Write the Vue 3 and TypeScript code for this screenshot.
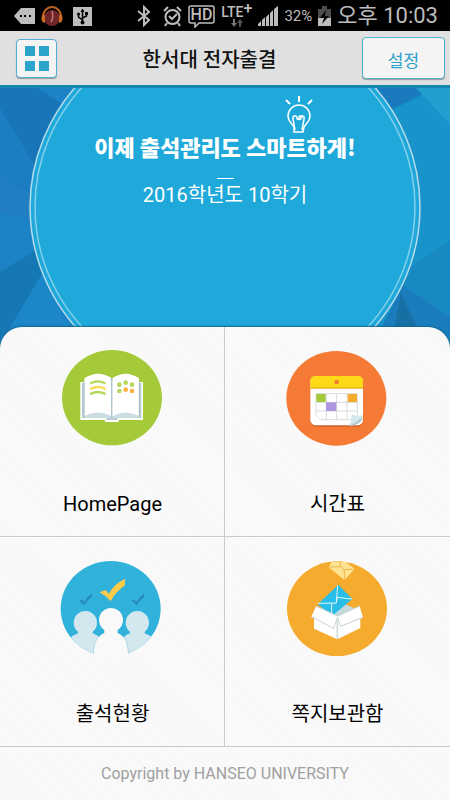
<script setup lang="ts">
interface MenuItem {
  id: string
  label: string
}

const menu: MenuItem[] = [
  { id: 'home', label: 'HomePage' },
  { id: 'timetable', label: '시간표' },
  { id: 'attendance', label: '출석현황' },
  { id: 'messages', label: '쪽지보관함' },
]
</script>

<template>
  <div class="app">
    <div class="status">
      <div class="status-group notices">
        <svg width="21" height="20" viewBox="0 0 21 20" aria-hidden="true">
          <path d="M0 10 L7 2 H21 V18 H7 Z" fill="#bdbdbd" />
          <path d="M6 9h2v2H6zM10 9h2v2h-2zM15 9h2v2h-2z" fill="#000" />
        </svg>
        <svg width="22" height="22" viewBox="0 0 22 22" aria-hidden="true">
          <circle cx="11" cy="13" r="8" fill="#6f2527" />
          <path d="M11 6 Q13 12 10 17" stroke="#bd7773" stroke-width="1.500" fill="none" />
          <path d="M2 14 C1 -2 21 -2 20 14" stroke="#b8601e" stroke-width="2" fill="none" />
          <path d="M1 10h3v8C0 17 0 14 1 10zM21 10h-3v8c4-1 4-4 3-8z" fill="#c76b24" />
        </svg>
        <svg width="24" height="20" viewBox="0 0 24 20" aria-hidden="true">
          <rect x="4" y="1" width="19" height="19" fill="#bdbdbd" />
          <path d="M13.500 4v12M9.500 8v3l4 3M17.500 7v3l-4 2" stroke="#000" stroke-width="1.500" fill="none" />
          <path d="M11.500 6l2-3.500 2 3.500zM16 6h3v3h-3z" fill="#000" />
          <circle cx="9.500" cy="8" r="1.500" />
          <circle cx="13.500" cy="16.500" r="2" />
        </svg>
      </div>
      <div class="status-group">
        <svg class="bluetooth" width="14" height="22" viewBox="0 0 14 22" aria-hidden="true">
          <path d="M1 6 L12 15 L7 20 V2 L12 7 L1 16" fill="none" stroke="#bdbdbd" stroke-width="2" />
        </svg>
        <svg width="19" height="22" viewBox="0 0 19 22" aria-hidden="true">
          <g fill="none" stroke="#bdbdbd" stroke-width="2">
            <circle cx="9.500" cy="12" r="7" />
            <path d="M1 6 L5 2M18 6 L14 2M4 18l-2 3M15 18l2 3" />
            <path d="M6 11l3 3 5-5" />
          </g>
        </svg>
        <svg width="27" height="24" viewBox="0 0 27 24" aria-hidden="true">
          <path d="M3 2H24Q26 2 26 4V17Q26 19 24 19H11L7 23V19H3Q1 19 1 17V4Q1 2 3 2Z" fill="none" stroke="#bdbdbd" stroke-width="1.500" />
          <text x="13.500" y="16" text-anchor="middle" font-family="Roboto, sans-serif" font-size="16" font-weight="500" fill="#bdbdbd">HD</text>
        </svg>
        <div class="lte">
          <span>LTE<sup>+</sup></span>
          <svg width="12" height="8" viewBox="0 0 12 8" aria-hidden="true">
            <path d="M2 0h2v4h2L3 8 0 4h2z" fill="#777" />
            <path d="M8 8h2V4h2L9 0 6 4h2z" fill="#555" />
          </svg>
        </div>
        <svg width="20" height="20" viewBox="0 0 20 20" aria-hidden="true">
          <path d="M0 20v-2l3-3v5zM4 20v-6l3-3v9zM8 20v-9l3-3v12zM12 20V7l3-3v16zM16 20V3l4-3v20z" fill="#bdbdbd" />
        </svg>
        <span class="percent">32%</span>
        <svg width="13" height="20" viewBox="0 0 13 20" aria-hidden="true">
          <path d="M4 0h5v3h4v9H0V3h4z" fill="#4d4d4d" />
          <path d="M0 12h13v8H0z" fill="#bdbdbd" />
          <path d="M8 4 2 12h4l-2 6 7-8H7z" fill="#000" />
        </svg>
        <span class="clock">오후 10:03</span>
      </div>
    </div>

    <header class="header">
      <button class="grid-button" type="button" aria-label="메뉴">
        <svg width="24" height="25" viewBox="0 0 24 25">
          <path d="M0 0h10v10H0zM14 0h10v10H14zM0 15h10v10H0zM14 15h10v10H14z" fill="#2ba3cb" />
        </svg>
      </button>
      <h1>한서대 전자출결</h1>
      <button class="settings" type="button">설정</button>
    </header>

    <section class="hero">
      <svg class="backdrop" viewBox="0 0 450 262" preserveAspectRatio="none" aria-hidden="true">
        <rect width="450" height="262" fill="#1b83c6" />
        <path d="M0 0H37L61 15 36 80 0 20z" fill="#1875b8" />
        <path d="M0 20 36 80V132L0 125z" fill="#1b7dc2" />
        <path d="M0 88 36 110V132L0 125z" fill="#207fc3" />
        <path d="M0 184 36 162 42 186 11 238 0 262z" fill="#1677b5" />
        <path d="M42 186 80 262H0L11 238z" fill="#1c87c8" />
        <path d="M375 0H450V262H375z" fill="#1994ca" />
        <path d="M375 0h41l7 6-30 15-18-16z" fill="#197bbd" />
        <path d="M416 0H450V36z" fill="#239fcf" />
        <path d="M450 152 410 180 400 201 450 233z" fill="#188ac1" />
        <path d="M403 197 450 229V262H370z" fill="#197dbd" />
        <path d="M401 205 417 240V262H390z" fill="#176fa4" />
        <ellipse cx="225" cy="119" rx="195" ry="187" fill="#1ea9da" stroke="#b6dcec" stroke-width="1.500" />
        <ellipse cx="225" cy="119" rx="190" ry="182" fill="none" stroke="#84cfea" stroke-width="1.500" />
      </svg>
      <div class="hero-text">
        <svg class="bulb" width="32" height="38" viewBox="0 0 32 38" aria-hidden="true">
          <g fill="none" stroke="#fff" stroke-width="1.500">
            <path d="M11 36h9l1-5c1-3 6-5 6-11a11 11 0 0 0-22 0c0 6 5 8 6 11z" />
            <path d="M12 34 10 23c-1-4 4-4 4-1 0 2 2 2 2 0 0-3 3-3 3 0M16 22c0 2 2 2 2 0 0-3 4-3 3 1l-2 11" />
            <path d="M16 0v6M3 4l4 4M29 4l-4 4" stroke-width="2" />
          </g>
        </svg>
        <h2>이제 출석관리도 스마트하게!</h2>
        <hr />
        <p>2016학년도 10학기</p>
      </div>
    </section>

    <main class="panel">
      <nav class="menu">
        <a v-for="item in menu" :key="item.id" class="cell" href="#">
          <svg v-if="item.id === 'home'" width="125" height="115" viewBox="0 0 375 345" aria-hidden="true">
            <ellipse cx="186" cy="173" rx="150" ry="143" fill="#a4ca39" />
            <path d="M91 126H279V240H206V246H165V240H91Z" fill="#fff" />
            <path d="M96 128H274V234H202V240H169V234H96Z" fill="#b8cdd5" />
            <path d="M103 115Q145 88 185 115V230Q145 210 103 229Z" fill="#fff" />
            <path d="M187 115Q227 88 267 115V229Q227 210 187 230Z" fill="#fff" />
            <path d="M103 228Q145 206 185 229V234H103ZM187 229Q227 206 267 228V234H187Z" fill="#cbdde3" />
            <path d="M185 113V234M102 127V233M268 127V233" stroke="#a7bdc7" stroke-width="3" />
            <g fill="none" stroke-width="7" stroke-linecap="round">
              <path d="M123 129Q144 119 164 129M123 161Q144 151 164 161" stroke="#b7d65c" />
              <path d="M123 146Q144 135 164 146" stroke="#f7dc4b" />
            </g>
            <g fill="#b7d65c">
              <circle cx="208" cy="134" r="7" /><circle cx="227" cy="128" r="7" />
              <circle cx="246" cy="134" r="7" /><circle cx="208" cy="153" r="7" />
            </g>
            <circle cx="227" cy="149" r="7" fill="#fbb040" />
            <circle cx="246" cy="153" r="7" fill="#fbb040" />
          </svg>

          <svg v-else-if="item.id === 'timetable'" width="125" height="115" viewBox="0 0 375 345" aria-hidden="true">
            <ellipse cx="184" cy="175" rx="150" ry="142" fill="#f47a35" />
            <rect x="106" y="110" width="158" height="150" rx="16" fill="#cf6425" />
            <rect x="106" y="108" width="158" height="148" rx="16" fill="#fff" />
            <path d="M106 144V124Q106 108 122 108H248Q264 108 264 124V144Z" fill="#fdda17" />
            <path d="M106 144H264" stroke="#edb216" stroke-width="4" />
            <circle cx="185" cy="126" r="7" fill="#f47a35" />
            <path d="M123 161H247V239H137L123 226ZM123 187H247M123 213H247M154 161V239M185 161V239M216 161V239" fill="none" stroke="#d8dcdd" stroke-width="3" />
            <path d="M124 162H152V186H124Z" fill="#a4ca39" />
            <path d="M153 187H184V213H153Z" fill="#af94df" />
            <path d="M218 162H246V186H218Z" fill="#f5ac2d" />
            <path d="M263 226Q262 253 222 257Q231 239 229 223Q244 230 263 226Z" fill="#d4e8ed" />
            <path d="M263 230Q261 254 222 257Q249 245 263 230Z" fill="#aec8cf" />
          </svg>

          <svg v-else-if="item.id === 'attendance'" width="125" height="115" viewBox="0 0 375 345" aria-hidden="true">
            <defs>
              <clipPath id="people-clip"><ellipse cx="182" cy="176" rx="150" ry="143" /></clipPath>
            </defs>
            <ellipse cx="182" cy="176" rx="150" ry="143" fill="#30b2db" />
            <g clip-path="url(#people-clip)">
              <g fill="#d2e8ee">
                <circle cx="106" cy="218" r="35" />
                <path d="M84 234V250Q53 260 47 300L80 330H166V290Q155 259 128 250V234Z" />
                <circle cx="262" cy="218" r="35" />
                <path d="M240 234V250Q211 260 202 292V330H285L326 300Q316 260 284 250V234Z" />
              </g>
              <path d="M164 234V248Q128 258 129 325H237Q238 258 203 248V234Z" fill="#279fc7" opacity=".3" />
            </g>
            <g fill="#f9f9f9">
              <circle cx="183" cy="210" r="36" />
              <path d="M163 232V249Q131 260 131 322H234Q235 260 203 249V232Z" />
            </g>
            <path d="M149 127 164 121Q171 122 176 132Q191 102 226 86L224 107Q200 121 182 153Q166 136 149 127Z" fill="#ffcb48" />
            <g fill="#278cc3">
              <path d="M87 152 95 148 103 155Q111 139 126 130L125 142Q111 151 104 166Z" />
              <path d="M244 152 252 148 260 155Q268 139 283 130L282 142Q268 151 261 166Z" />
            </g>
          </svg>

          <svg v-else width="125" height="115" viewBox="0 0 375 345" aria-hidden="true">
            <ellipse cx="186" cy="176" rx="150" ry="142" fill="#f5ab2d" />
            <path d="M170 35H211L239 57 208 90 161 52Z" fill="#ffe391" />
            <path d="M161 51 195 50 196 34M195 48 208 59 239 57M208 59V89" fill="none" stroke="#e8b650" stroke-width="3" />
            <path d="M117 184 187 151 256 184 187 213Z" fill="#c6d9df" />
            <path d="M190 104 232 147 172 197 128 163Z" fill="#29bdea" />
            <path d="M128 160 184 159 188 106M184 156 187 142 231 147M170 160V195" fill="none" stroke="#e5f7fc" stroke-width="3" />
            <path d="M117 184 187 213 256 184V234L187 268 117 236Z" fill="#fff" />
            <path d="M123 169 188 198 176 235 109 200Z" fill="#fff" />
            <path d="M254 169 188 198 197 229 264 202Z" fill="#fff" />
            <path d="M122 168 188 198 254 168M109 200 176 235 187 204 197 229 264 202" fill="none" stroke="#c6d3d3" stroke-width="3" />
            <path d="M187 205V267" stroke="#d1dcdc" stroke-width="5" />
          </svg>
          <span>{{ item.label }}</span>
        </a>
      </nav>
      <footer>Copyright by HANSEO UNIVERSITY</footer>
    </main>
  </div>
</template>

<style>
body {
  margin: 0;
}
</style>

<style scoped>
.app {
  display: flex;
  flex-direction: column;
  min-height: 100vh;
  font-family: Roboto, "Noto Sans CJK KR", sans-serif;
  background: #f8f8f8;
}

.status {
  display: flex;
  justify-content: space-between;
  align-items: center;
  height: 31px;
  padding: 0 12px 0 14px;
  background: #000;
  color: #bdbdbd;
}

.status-group {
  display: flex;
  align-items: center;
  gap: 6px;
}

.bluetooth {
  margin-right: 6px;
}

.lte {
  display: flex;
  flex-direction: column;
  align-items: center;
  font-size: 14px;
  line-height: 14px;
  font-weight: 500;
}

.lte sup {
  font-size: 16px;
  line-height: 0;
  vertical-align: 3px;
}

.percent {
  font-size: 15px;
}

.clock {
  font-size: 22px;
  line-height: 30px;
  white-space: nowrap;
}

.header {
  display: flex;
  justify-content: space-between;
  align-items: center;
  height: 54px;
  padding: 0 5px 0 16px;
  border-bottom: 3px solid #1688ae;
  background: repeating-linear-gradient(45deg, #dfdfdf 0 2px, #e1e1e1 2px 4px);
}

.header h1 {
  margin: 0;
  padding-top: 4px;
  font-size: 20px;
  line-height: 28px;
  font-weight: 500;
  color: #111;
}

.header button {
  box-sizing: border-box;
  padding: 0;
  border: 1px solid #4fb2d3;
  border-radius: 4px;
  background: #f4f4f4;
  box-shadow: 0 1px 1px #999;
}

.grid-button {
  display: flex;
  align-items: center;
  justify-content: center;
  width: 41px;
  height: 39px;
}

.header .settings {
  width: 83px;
  height: 42px;
  padding-top: 2px;
  font-family: inherit;
  font-size: 17px;
  color: #2ba0c8;
}

.hero {
  position: relative;
  height: 239px;
}

.backdrop {
  position: absolute;
  top: 0;
  left: 0;
  width: 100%;
  height: 262px;
}

.hero-text {
  position: relative;
  display: flex;
  flex-direction: column;
  align-items: center;
  padding-top: 8px;
  color: #fff;
}

.bulb {
  margin-left: 147px;
}

.hero-text h2 {
  margin: -2px 0 0;
  font-family: "Noto Sans CJK KR", sans-serif;
  font-size: 22px;
  line-height: 28px;
  font-weight: 900;
  white-space: nowrap;
}

.hero-text hr {
  width: 17px;
  height: 1px;
  margin: 18px 0 2px;
  border: 0;
  background: #fff;
}

.hero-text p {
  margin: 0;
  font-size: 20px;
  line-height: 28px;
}

.panel {
  position: relative;
  display: flex;
  flex: 1;
  flex-direction: column;
  border-radius: 22px 22px 0 0;
  background: repeating-linear-gradient(45deg, #f8f8f8 0 2px, #fafafa 2px 4px);
  box-shadow: 0 -1px 2px #13678f;
}

.menu {
  display: grid;
  grid-template-columns: 1fr 1fr;
}

.cell {
  display: flex;
  flex-direction: column;
  align-items: center;
  box-sizing: border-box;
  height: 210px;
  padding-top: 13px;
  gap: 35px;
  border-bottom: 1px solid #cacaca;
  font-size: 20px;
  line-height: 28px;
  color: #000;
  text-decoration: none;
}

.cell:nth-child(odd) {
  box-shadow: inset -1px 0 #cacaca;
}

footer {
  display: flex;
  flex: 1;
  align-items: center;
  justify-content: center;
  font-size: 16px;
  color: #a0a0a0;
}
</style>
